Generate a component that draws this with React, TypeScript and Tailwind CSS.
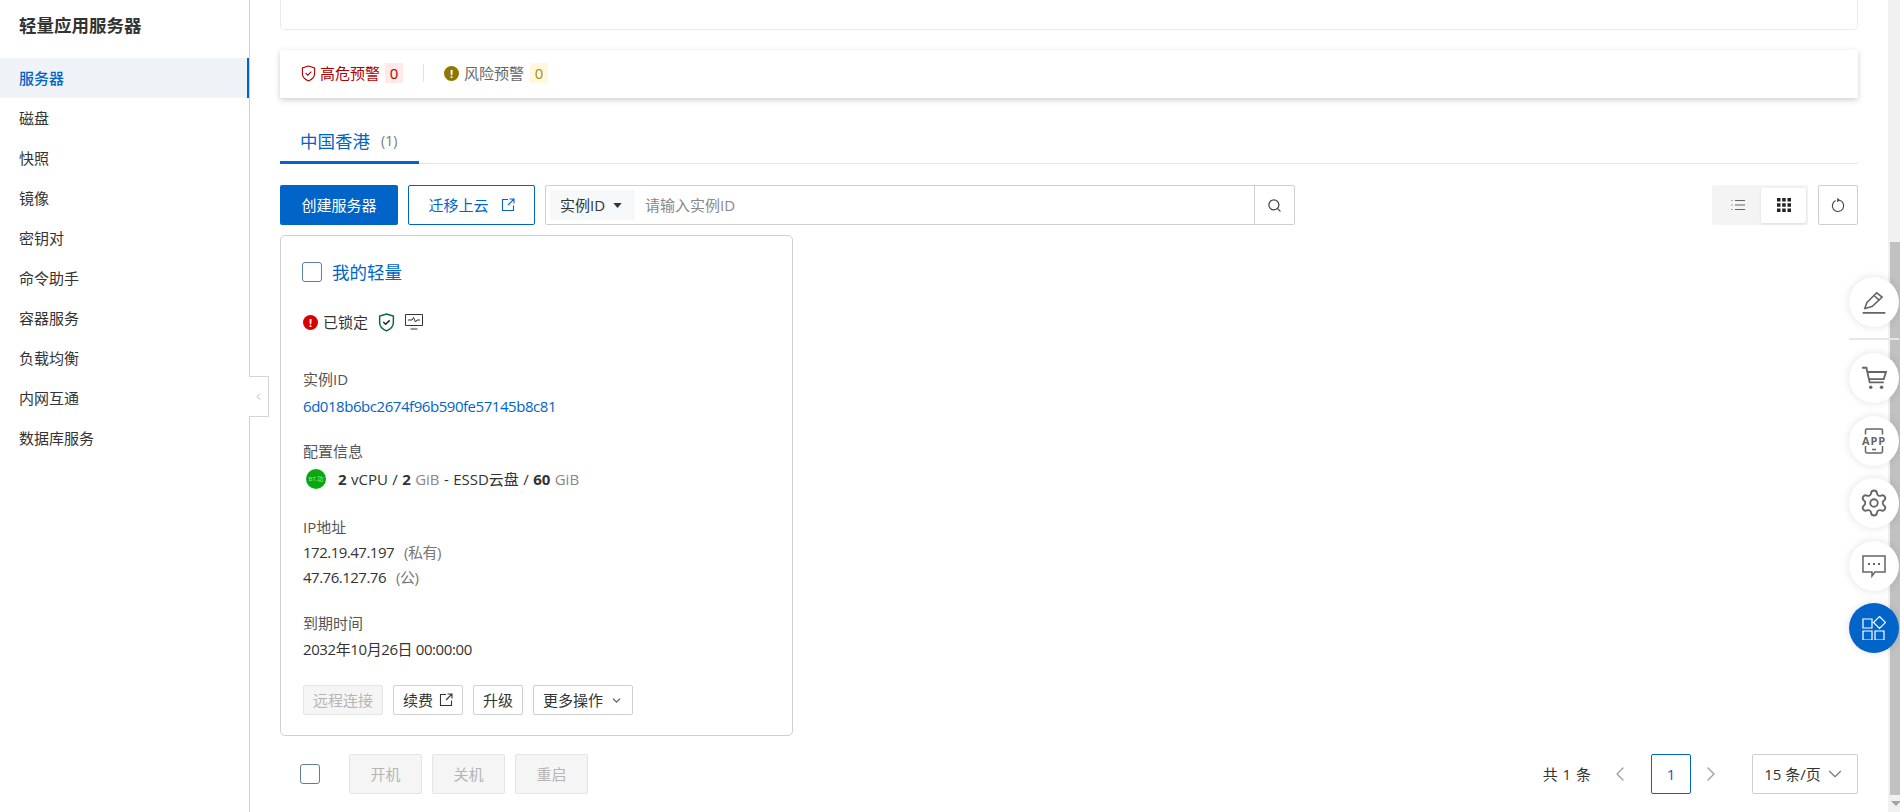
import { ChevronDown, ChevronLeft, ChevronRight, Search, Settings } from 'lucide-react';

const NAV_ITEMS = ['服务器', '磁盘', '快照', '镜像', '密钥对', '命令助手', '容器服务', '负载均衡', '内网互通', '数据库服务'];

function ExternalIcon({ className }: { className?: string }) {
  return (
    <svg viewBox="0 0 14 14" className={className} fill="none" stroke="currentColor" strokeWidth="1.1">
      <path d="M7 1.500H1.500v11h11V7.500" />
      <path d="M8.500 1H13v4.500M13 1 7 7" />
    </svg>
  );
}

function FloatButton({ children, blue }: { children: React.ReactNode; blue?: boolean }) {
  return (
    <div className={`w-[50px] h-[50px] rounded-full flex items-center justify-center shadow-[0_0_8px_rgba(0,0,0,0.12)] ${blue ? 'bg-[#0064c8]' : 'bg-white'}`}>
      {children}
    </div>
  );
}

function CardButton({ children, disabled }: { children: React.ReactNode; disabled?: boolean }) {
  return (
    <div className={`h-[30px] px-[9px] flex items-center rounded-[2px] border whitespace-nowrap ${disabled ? 'border-[#e4e4e4] bg-[#f5f5f5] text-[#b5b5b5]' : 'border-[#cfcfcf] bg-white text-[#333]'}`}>
      {children}
    </div>
  );
}

function BatchButton({ label }: { label: string }) {
  return (
    <div className="w-[73px] h-10 flex items-center justify-center rounded-[2px] border border-[#e4e4e4] bg-[#f5f5f5] text-[#b5b5b5]">{label}</div>
  );
}

export default function App() {
  return (
    <div className="relative flex w-[1900px] h-[812px] overflow-hidden bg-white text-[15px] leading-[22px] text-[#333] font-['Open_Sans','Noto_Sans_CJK_SC',sans-serif]">
      {/* Sidebar */}
      <aside className="w-[250px] shrink-0 border-r border-[#cfcfcf]">
        <div className="h-[58px] pl-[19px] pt-[12px] text-[17.5px] font-bold leading-[26px] text-[#333]">轻量应用服务器</div>
        {NAV_ITEMS.map((item, i) => (
          <div key={item} className={`h-10 pl-[19px] flex items-center ${i === 0 ? 'bg-[#eff2f7] text-[#0064c8] border-r-2 border-[#0064c8] font-medium' : 'text-[#333]'}`}>
            {item}
          </div>
        ))}
      </aside>

      {/* Collapse handle */}
      <div className="absolute left-[249px] top-[376px] w-[20px] h-[41px] bg-white border border-l-0 border-[#d5d5d5] flex items-center justify-center">
        <ChevronLeft className="w-[11px] h-[11px] text-[#b5b5b5]" />
      </div>

      {/* Main */}
      <main className="flex-1 min-w-0 pl-[30px] pr-[30px]">
        <div className="h-[30px] border border-t-0 border-[#eaeaea] rounded-b-[5px]" />

        <div className="mt-[20px] h-12 pl-[21px] pb-[2px] flex items-center shadow-[0_2px_6px_rgba(0,0,0,0.2)]">
          <svg viewBox="0 0 16 18" className="w-[15px] h-[17px] text-[#b30000]" fill="none" stroke="currentColor" strokeWidth="1.2">
            <path d="M8 1 14.500 3v6c0 4-3 6.500-6.500 8C4.500 15.500 1.500 13 1.500 9V3L8 1Z" />
            <path d="m5 8.500 2.200 2.200L11 7" />
          </svg>
          <span className="ml-1 text-[#b30000]">高危预警</span>
          <span className="ml-[5px] w-[18px] h-5 flex items-center justify-center bg-[#ffe9e9] text-[#b30000]">0</span>
          <span className="ml-5 w-px h-[18px] bg-[#e2e2e2]" />
          <span className="ml-5 w-[15px] h-[15px] rounded-full bg-[#8f7600] flex items-center justify-center text-white text-[11px] font-bold leading-none">!</span>
          <span className="ml-[5px] text-[#666]">风险预警</span>
          <span className="ml-[6px] w-[18px] h-5 flex items-center justify-center bg-[#fff8dc] text-[#a88f10]">0</span>
        </div>

        {/* Region tab */}
        <div className="mt-[22px] h-[44px] border-b border-[#e5e5e5]">
          <div className="w-[139px] h-[44px] pl-5 flex items-center border-b-[3px] border-[#0064c8]">
            <span className="text-[17.5px] text-[#0064c8]">中国香港</span>
            <span className="ml-[11px] text-[#777] text-[14px]">(1)</span>
          </div>
        </div>

        {/* Toolbar */}
        <div className="mt-[21px] h-10 flex items-stretch">
          <div className="w-[118px] flex items-center justify-center rounded-[2px] bg-[#0064c8] text-white">创建服务器</div>
          <div className="ml-[10px] w-[127px] flex items-center justify-center gap-3 rounded-[2px] border border-[#0064c8] text-[#0064c8]">
            迁移上云
            <ExternalIcon className="w-[14px] h-[14px]" />
          </div>
          <div className="ml-[10px] w-[750px] flex items-center rounded-[2px] border border-[#cfcfcf] pl-1">
            <div className="w-[85px] h-[30px] pl-[10px] flex items-center bg-[#f7f8fa] text-[#333]">
              实例ID
              <svg viewBox="0 0 10 6" className="ml-2 w-[9px] h-[5px] fill-[#333]"><path d="M0 0h10L5 6z" /></svg>
            </div>
            <span className="ml-[10px] flex-1 text-[#888]">请输入实例ID</span>
            <div className="w-10 h-[38px] flex items-center justify-center border-l border-[#cfcfcf]">
              <Search className="w-[15px] h-[15px] text-[#444]" />
            </div>
          </div>
          <div className="ml-auto w-[96px] p-[2px] flex items-center rounded-[2px] bg-[#f4f4f4]">
            <div className="w-[47px] flex justify-center">
              <svg viewBox="0 0 14 12" className="w-[14px] h-3" fill="none" strokeWidth="1">
                <path d="M4 1.500h10M4 6h10M4 10.500h10" stroke="#666" />
                <path d="M0 1.500h2M0 6h2M0 10.500h2" stroke="#aaa" />
              </svg>
            </div>
            <div className="w-[45px] h-[35px] flex items-center justify-center rounded-[2px] bg-white shadow-[0_1px_3px_rgba(0,0,0,0.1)]">
              <svg viewBox="0 0 14 14" className="w-[14px] h-[14px] fill-[#222]">
                <path d="M0 0h3.500v3.500H0zM5.200 0h3.500v3.500H5.200zM10.500 0H14v3.500h-3.500zM0 5.200h3.500v3.500H0zM5.200 5.200h3.500v3.500H5.200zM10.500 5.200H14v3.500h-3.500zM0 10.500h3.500V14H0zM5.200 10.500h3.500V14H5.200zM10.500 10.500H14V14h-3.500z" />
              </svg>
            </div>
          </div>
          <div className="ml-[10px] w-10 flex items-center justify-center rounded-[2px] border border-[#cfcfcf]">
            <svg viewBox="0 0 14 16" className="w-[14px] h-[16px]" fill="none" stroke="#444" strokeWidth="1.100">
              <path d="M8.500 3.300a5.700 5.700 0 1 1-3.800 0.300" />
              <path d="M6.200 0.800 9.200 3.200 6.200 5.200Z" fill="#444" stroke="none" />
            </svg>
          </div>
        </div>

        {/* Instance card */}
        <div className="mt-[10px] w-[513px] border border-[#cfcfcf] rounded-[5px] pl-[22px] pr-5 pt-[24px] pb-[20px]">
          <div className="h-6 -ml-px flex items-center">
            <span className="w-5 h-5 rounded-[3px] border border-[#5f7d9f]" />
            <span className="ml-[10px] text-[17.5px] text-[#0064c8]">我的轻量</span>
          </div>

          <div className="mt-[27px] h-[22px] flex items-center">
            <span className="w-[15px] h-[15px] rounded-full bg-[#d90000] flex items-center justify-center text-white text-[11px] font-bold leading-none">!</span>
            <span className="ml-[5px]">已锁定</span>
            <svg viewBox="0 0 16 18" className="ml-[10px] w-[17px] h-[19px] text-[#0a6b3a]" fill="none" stroke="currentColor" strokeWidth="1.400">
              <path d="M8 1 14.500 3v6c0 4-3 6.500-6.500 8C4.500 15.500 1.500 13 1.500 9V3L8 1Z" />
              <path d="m5 8.500 2.200 2.200L11 7" stroke="#222" />
            </svg>
            <svg viewBox="0 0 18 16" className="ml-[10px] w-[18px] h-[16px]" fill="none" stroke="#333" strokeWidth="1">
              <path d="M.5.500h17v11H.5zM5.500 15h7" />
              <path d="M3 6h4l1.500-2.500 2 4.500L12 6h3" />
            </svg>
          </div>

          <div className="mt-[35px] text-[#555]">实例ID</div>
          <div className="mt-[5px] text-[#0064c8] tracking-[-0.45px]">6d018b6bc2674f96b590fe57145b8c81</div>

          <div className="mt-[23px] text-[#555]">配置信息</div>
          <div className="mt-[6px] flex items-center">
            <span className="ml-[3px] w-5 h-5 rounded-full bg-[#08a90f] flex items-center justify-center text-[6px] leading-none text-[#a6e6a8]">BT.功</span>
            <span className="ml-3 whitespace-pre text-[#333] [word-spacing:0.5px]">
              <b className="font-bold">2</b> vCPU / <b className="font-bold">2</b> <span className="text-[#888]">GiB</span> - ESSD云盘 / <b className="font-bold">60</b> <span className="text-[#888]">GiB</span>
            </span>
          </div>

          <div className="mt-[26px] text-[#555]">IP地址</div>
          <div className="mt-[3px] tracking-[-0.5px]">172.19.47.197<span className="ml-[10px] text-[#777]">(私有)</span></div>
          <div className="mt-[3px] tracking-[-0.5px]">47.76.127.76<span className="ml-[10px] text-[#777]">(公)</span></div>

          <div className="mt-[24px] text-[#555]">到期时间</div>
          <div className="mt-1 tracking-[-0.4px]">2032年10月26日 00:00:00</div>

          <div className="mt-[25px] flex gap-[10px]">
            <CardButton disabled>远程连接</CardButton>
            <CardButton>续费<ExternalIcon className="ml-[6px] w-[14px] h-[14px]" /></CardButton>
            <CardButton>升级</CardButton>
            <CardButton>更多操作<ChevronDown className="ml-[7px] w-[13px] h-[13px] text-[#555]" /></CardButton>
          </div>
        </div>

        {/* Footer bar */}
        <div className="mt-[18px] h-10 flex items-center">
          <span className="ml-5 w-5 h-5 rounded-[3px] border border-[#5f7d9f]" />
          <div className="ml-[29px] flex gap-[10px]">
            <BatchButton label="开机" />
            <BatchButton label="关机" />
            <BatchButton label="重启" />
          </div>
          <div className="ml-auto flex items-center">
            <span className="whitespace-pre [word-spacing:1px]">共 1 条</span>
            <ChevronLeft strokeWidth={1.2} className="ml-[17px] w-6 h-6 text-[#999]" />
            <div className="ml-[19px] w-10 h-10 flex items-center justify-center rounded-[2px] border border-[#0064c8] text-[#0064c8]">1</div>
            <ChevronRight strokeWidth={1.2} className="ml-2 w-6 h-6 text-[#999]" />
            <div className="ml-[29px] w-[106px] h-10 flex items-center justify-center rounded-[2px] border border-[#cfcfcf] whitespace-pre">
              15 条/页
              <ChevronDown strokeWidth={1.2} className="ml-[3px] w-[22px] h-[22px] text-[#777]" />
            </div>
          </div>
        </div>
      </main>

      {/* Page scrollbar */}
      <div className="relative w-3 shrink-0 bg-[#f1f1f1]">
        <div className="absolute left-[2px] right-0 top-[242px] h-[553px] bg-[#c1c1c1]" />
        <div className="absolute left-[3px] bottom-[6px] w-0 h-0 border-x-[5px] border-x-transparent border-t-[5px] border-t-[#a3a3a3]" />
      </div>

      {/* Floating tools */}
      <div className="absolute left-[1849px] top-[277px] flex flex-col">
        <FloatButton>
          <svg viewBox="0 0 24 24" className="w-[26px] h-[26px]" fill="none" stroke="#666" strokeWidth="1.500">
            <path d="m3.500 18 2-5.500L14.500 3.500l5 4-9 8.500-6.500 2Z" />
            <path d="M1.500 22h21M12 6l5 4.500" />
          </svg>
        </FloatButton>
        <div className="mt-[11px] mb-[13px] h-[2px] bg-[#e4e7ec]" />
        <FloatButton>
          <svg viewBox="0 0 24 24" className="w-[26px] h-[26px]" fill="none" stroke="#666" strokeWidth="1.700">
            <path d="M1 2.500h4l3 13.500h13" />
            <path d="M5.800 6.500H23L21 13H7.500" />
            <circle cx="9" cy="20.500" r="1.600" fill="#666" stroke="none" />
            <circle cx="19" cy="20.500" r="1.600" fill="#666" stroke="none" />
          </svg>
        </FloatButton>
        <div className="mt-[13px]">
          <FloatButton>
            <svg viewBox="0 0 26 26" className="w-[26px] h-[26px]" fill="none" stroke="#666" strokeWidth="1.500">
              <path d="M4.500 6.500V2.500A1.500 1.500 0 0 1 6 1h14a1.500 1.500 0 0 1 1.500 1.500v4M4.500 18v5.500A1.500 1.500 0 0 0 6 25h14a1.500 1.500 0 0 0 1.500-1.500V18M11 21.500h4" />
              <text x="13" y="16.500" textAnchor="middle" fontSize="11" fontWeight="700" letterSpacing="0.8" fill="#666" stroke="none" fontFamily="Open Sans, sans-serif">APP</text>
            </svg>
          </FloatButton>
        </div>
        <div className="mt-3">
          <FloatButton><Settings strokeWidth={1.5} className="w-[30px] h-[30px] text-[#666]" /></FloatButton>
        </div>
        <div className="mt-[13px]">
          <FloatButton>
            <svg viewBox="0 0 24 24" className="w-[24px] h-[24px]" fill="none" stroke="#666" strokeWidth="1.500">
              <path d="M1 2h22v16H13l-3 4v-4H1V2Z" />
              <path d="M6 10h2M11 10h2M16 10h2" strokeWidth="2" />
            </svg>
          </FloatButton>
        </div>
        <div className="mt-3">
          <FloatButton blue>
            <svg viewBox="0 0 24 24" className="w-[24px] h-[24px]" fill="none" stroke="#fff" strokeWidth="1.200">
              <path d="M1 3h9v9H1zM1 15h9v9H1zM13 15h9v9h-9zM17.500 0.500l6 6-6 6-6-6z" />
            </svg>
          </FloatButton>
        </div>
      </div>
    </div>
  );
}
